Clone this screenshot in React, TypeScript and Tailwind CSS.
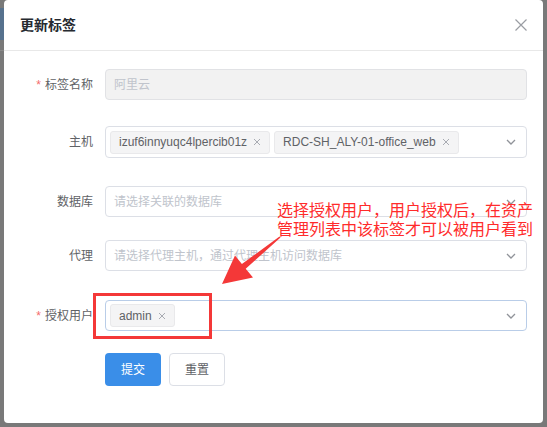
import React from "react";

const FONT = { fontFamily: '"Liberation Sans", "Noto Sans CJK SC", Arial, sans-serif' };

function Chevron() {
  return (
    <svg width="10" height="6" viewBox="0 0 10 6" className="shrink-0">
      <polyline points="1,1 5,5 9,1" fill="none" stroke="#909399" strokeWidth="1.3" />
    </svg>
  );
}

function TagX() {
  return (
    <svg width="8" height="8" viewBox="0 0 8 8" className="shrink-0">
      <path d="M1 1 L7 7 M7 1 L1 7" stroke="#a8abb2" strokeWidth="1" />
    </svg>
  );
}

function Tag({ text }: { text: string }) {
  return (
    <div className="h-[23px] flex items-center gap-[6px] pl-[8px] pr-[8px] bg-[#f4f4f5] border border-[#e9e9eb] rounded-[3px] text-[12px] text-[#5f6266] whitespace-nowrap">
      <span>{text}</span>
      <TagX />
    </div>
  );
}

function Label({ text, required }: { text: string; required?: boolean }) {
  return (
    <div className="w-[89px] shrink-0 flex justify-end items-center text-[12px] text-[#606266]">
      {required && <span className="text-[#f56c6c] mr-[4px]">*</span>}
      <span>{text}</span>
    </div>
  );
}

export default function App() {
  return (
    <div className="w-[547px] h-[427px] bg-[#797979] relative overflow-hidden" style={FONT}>
      <div className="absolute left-0 top-[8px] w-[4px] h-[32px] bg-[#57728e]" />
      <div className="absolute left-0 top-[50px] w-[4px] h-[1px] bg-[#8a8a8a]" />
      <div className="ml-[4px] w-[539px] h-[423px] bg-white rounded-[4px] flex flex-col relative">
        {/* header */}
        <div className="h-[51px] shrink-0 border-b border-[#e8e8e8] flex items-center justify-between pl-[16px] pr-[16px]">
          <span className="text-[14px] font-semibold text-[#262a30]">更新标签</span>
          <svg width="12" height="12" viewBox="0 0 12 12">
            <path d="M0.5 0.5 L11.5 11.5 M11.5 0.5 L0.5 11.5" stroke="#9a9da3" strokeWidth="1.2" />
          </svg>
        </div>

        <div className="pr-[16px] flex flex-col">
          {/* row 1 */}
          <div className="mt-[18px] flex items-center">
            <Label text="标签名称" required />
            <div className="ml-[12px] flex-1 h-[31px] bg-[#f2f2f2] border border-[#e1e2e5] rounded-[4px] flex items-center pl-[8px] text-[12px] text-[#c0c4cc]">
              阿里云
            </div>
          </div>

          {/* row 2 */}
          <div className="mt-[26px] flex items-center">
            <Label text="主机" />
            <div className="ml-[12px] flex-1 h-[32px] border border-[#dcdfe6] rounded-[4px] flex items-center pl-[4px] pr-[10px] gap-[4px]">
              <Tag text="izuf6innyuqc4lpercib01z" />
              <Tag text="RDC-SH_ALY-01-office_web" />
              <div className="ml-auto">
                <Chevron />
              </div>
            </div>
          </div>

          {/* row 3 */}
          <div className="mt-[28px] flex items-center">
            <Label text="数据库" />
            <div className="ml-[12px] flex-1 h-[31px] border border-[#dcdfe6] rounded-[4px] flex items-center pl-[8px] pr-[10px] text-[12px] text-[#c0c4cc]">
              <span>请选择关联的数据库</span>
              <div className="ml-auto">
                <Chevron />
              </div>
            </div>
          </div>

          {/* row 4 */}
          <div className="mt-[23px] flex items-center">
            <Label text="代理" />
            <div className="ml-[12px] flex-1 h-[31px] border border-[#dcdfe6] rounded-[4px] flex items-center pl-[8px] pr-[10px] text-[12px] text-[#c0c4cc]">
              <span>请选择代理主机，通过代理主机访问数据库</span>
              <div className="ml-auto">
                <Chevron />
              </div>
            </div>
          </div>

          {/* row 5 */}
          <div className="mt-[29px] flex items-center">
            <Label text="授权用户" required />
            <div className="ml-[12px] flex-1 h-[31px] border border-[#b9cde8] rounded-[4px] flex items-center pl-[4px] pr-[10px]">
              <Tag text="admin" />
              <div className="ml-auto">
                <Chevron />
              </div>
            </div>
          </div>

          {/* buttons */}
          <div className="mt-[22px] ml-[101px] flex gap-[8px]">
            <button className="w-[56px] h-[33px] rounded-[4px] bg-[#3a8ee8] text-white text-[12px]">提交</button>
            <button className="w-[56px] h-[33px] rounded-[4px] bg-white border border-[#dcdfe6] text-[#606266] text-[12px]">重置</button>
          </div>
        </div>
      </div>

      {/* annotations */}
      <div className="absolute left-[93px] top-[293px] w-[119px] h-[46px] border-[3px] border-[#f43838]" />
      <svg className="absolute left-0 top-0" width="547" height="427" viewBox="0 0 547 427">
        <polygon
          points="279.5,236.4 241.9,264.1 235,255.5 222,284 253,277.5 245.7,268.7 280.5,237.6"
          fill="#f43838"
        />
      </svg>
      <div
        className="absolute left-[277px] top-[200px] text-[16px] leading-[19px] text-[#ff2b2b] whitespace-nowrap"
        style={{ fontFamily: '"Noto Sans CJK SC", sans-serif' }}
      >
        <div>选择授权用户，用户授权后，在资产</div>
        <div>管理列表中该标签才可以被用户看到</div>
      </div>
    </div>
  );
}
